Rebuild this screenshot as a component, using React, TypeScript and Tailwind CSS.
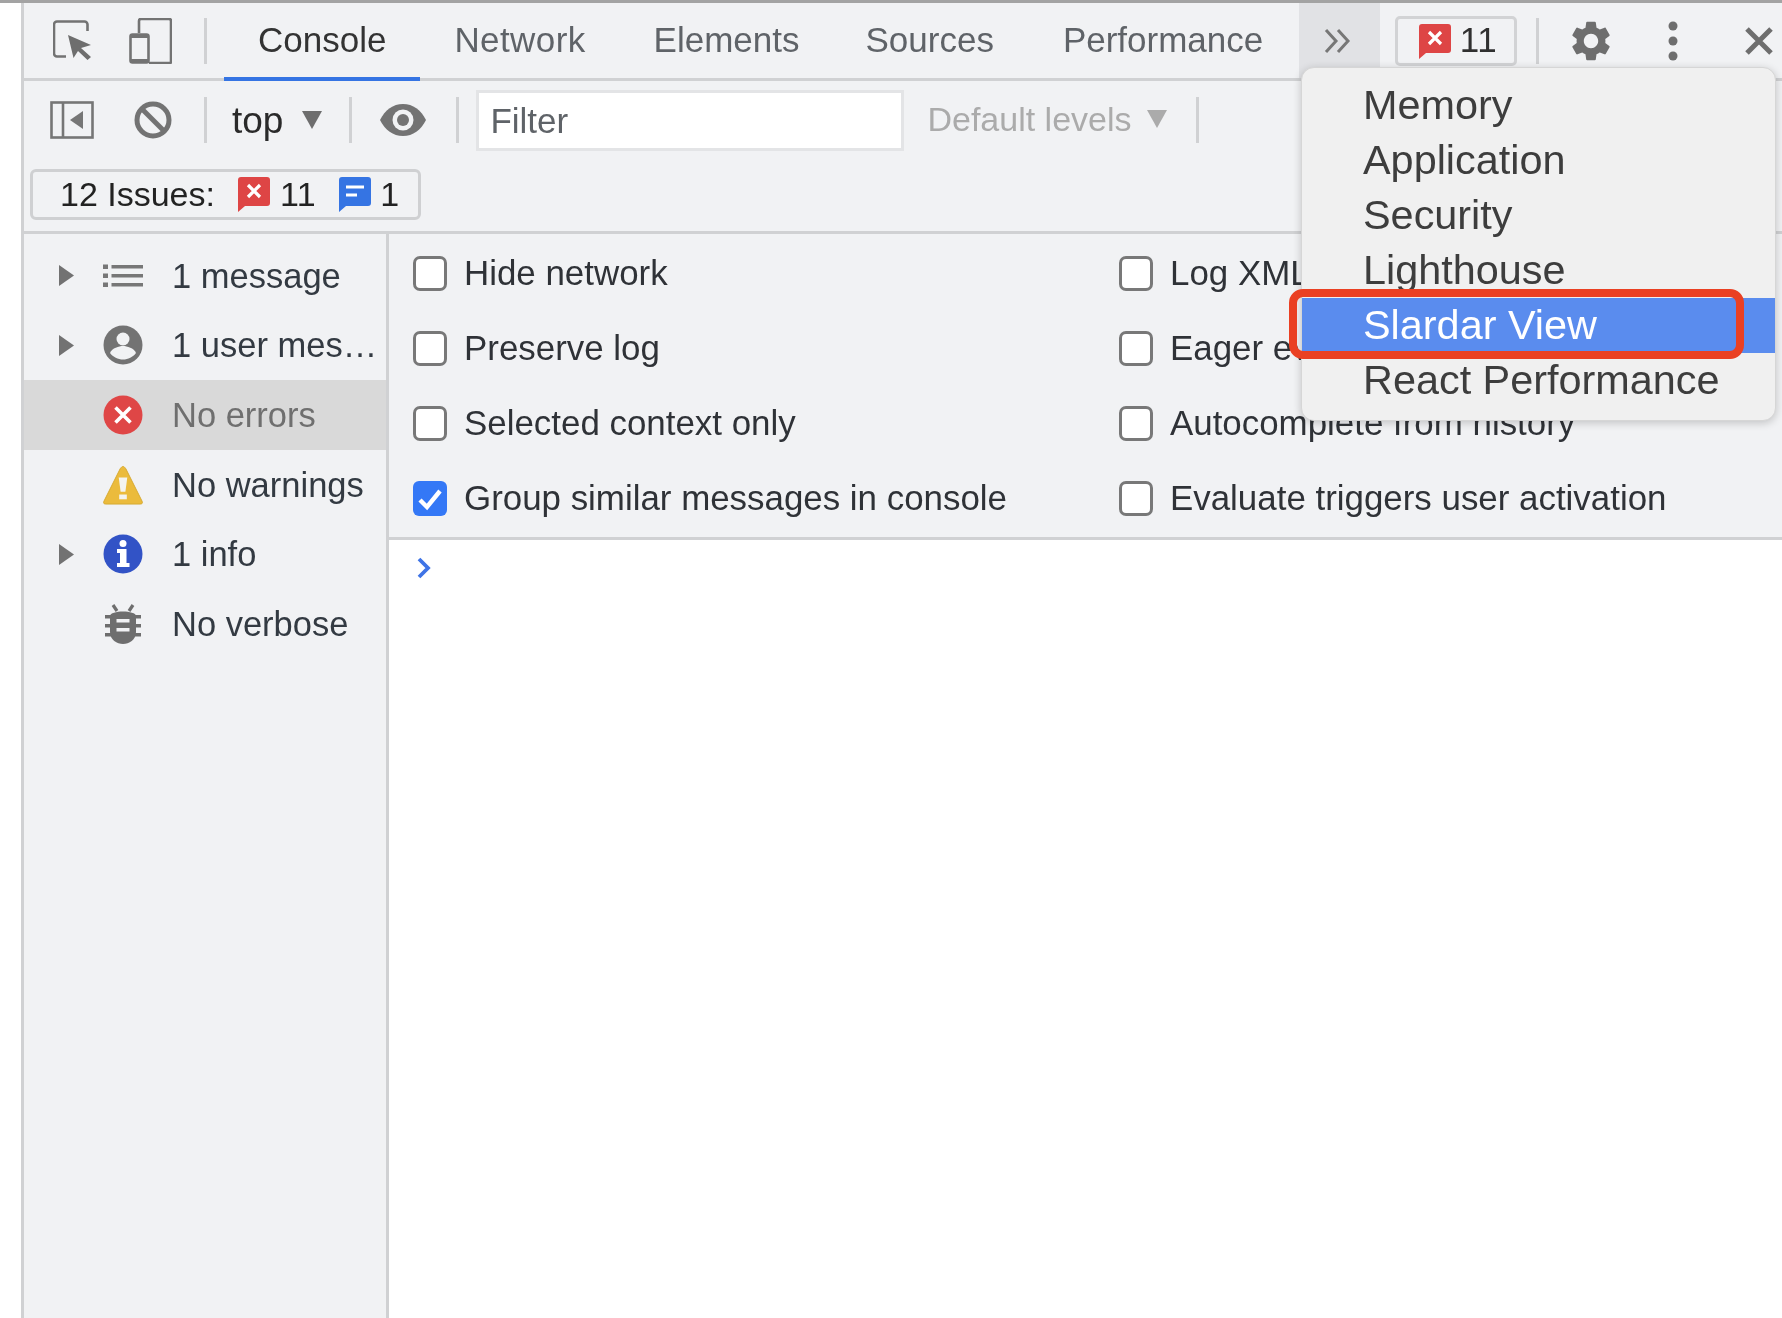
import React from "react";

const Sep = ({ className = "" }: { className?: string }) => (
  <div className={"w-[3px] h-[46px] bg-[#d0d1d3] shrink-0 " + className} />
);

const Tri = ({ className = "", fill = "#6e6e6e" }: { className?: string; fill?: string }) => (
  <svg width="20" height="18" viewBox="0 0 20 18" className={"shrink-0 " + className}>
    <path d="M0 0H20L10 18Z" fill={fill} />
  </svg>
);

const RightTri = () => (
  <svg width="15" height="21" viewBox="0 0 15 21" className="shrink-0">
    <path d="M0 0L15 10.5L0 21Z" fill="#727272" />
  </svg>
);

const Inspect = () => (
  <svg width="40" height="42" viewBox="0 0 40 42" className="shrink-0">
    <path d="M34.5 11V4.5a3 3 0 0 0-3-3H4a3 3 0 0 0-3 3v29a3 3 0 0 0 3 3h9" fill="none" stroke="#737373" strokeWidth="2.6" />
    <path d="M15 15L38 25L28 28L38 37L34.5 40L25 31L20.5 38Z" fill="#6e6e6e" />
  </svg>
);

const Device = () => (
  <svg width="43" height="46" viewBox="0 0 43 46" className="shrink-0">
    <path d="M10 15V3a2 2 0 0 1 2-2h28a2 2 0 0 1 2 2v41a1 1 0 0 1-1 1H20" fill="none" stroke="#737373" strokeWidth="2.6" />
    <rect x="1.5" y="16.5" width="18" height="28" rx="2" fill="none" stroke="#737373" strokeWidth="2.6" />
    <rect x="1" y="16" width="19" height="4" fill="#737373" />
    <rect x="1" y="41" width="19" height="4" fill="#737373" />
  </svg>
);

const Bubble = ({ color, kind }: { color: string; kind: "x" | "lines" }) => (
  <svg width="32" height="36" viewBox="0 0 32 36" className="shrink-0">
    <path d="M3 1H29a3 3 0 0 1 3 3V27a3 3 0 0 1-3 3H7L0 36V4a3 3 0 0 1 3-3Z" fill={color} />
    {kind === "x" ? (
      <path d="M10 9L22 21M22 9L10 21" stroke="#fff" strokeWidth="3.2" />
    ) : (
      <path d="M7 11H25M7 19H18" stroke="#fff" strokeWidth="3" />
    )}
  </svg>
);

const Gear = () => (
  <svg width="48" height="48" viewBox="0 0 24 24" fill="#6e6e6e" className="shrink-0">
    <path d="M19.14 12.94c.04-.3.06-.61.06-.94 0-.32-.02-.64-.07-.94l2.03-1.58c.18-.14.23-.41.12-.61l-1.92-3.32c-.12-.22-.37-.29-.59-.22l-2.39.96c-.5-.38-1.03-.7-1.62-.94l-.36-2.54c-.04-.24-.24-.41-.48-.41h-3.84c-.24 0-.43.17-.47.41l-.36 2.54c-.59.24-1.13.57-1.62.94l-2.39-.96c-.22-.08-.47 0-.59.22L2.74 8.87c-.12.21-.08.47.12.61l2.03 1.58c-.05.3-.09.63-.09.94s.02.64.07.94l-2.03 1.58c-.18.14-.23.41-.12.61l1.92 3.32c.12.22.37.29.59.22l2.39-.96c.5.38 1.03.7 1.62.94l.36 2.54c.05.24.24.41.48.41h3.84c.24 0 .44-.17.47-.41l.36-2.54c.59-.24 1.13-.56 1.62-.94l2.39.96c.22.08.47 0 .59-.22l1.92-3.32c.12-.22.07-.47-.12-.61l-2.01-1.58zM12 15.6c-1.98 0-3.6-1.62-3.6-3.6s1.62-3.6 3.6-3.6 3.6 1.62 3.6 3.6-1.62 3.6-3.6 3.6z" />
  </svg>
);

const Icon = ({ kind }: { kind: string }) => {
  if (kind === "list")
    return (
      <svg width="40" height="40" viewBox="0 0 40 40">
        <path d="M0 8.5H5V13H0ZM0 17.5H5V22H0ZM0 26.5H5V31H0Z" fill="#777" />
        <path d="M8.5 9H40V12.5H8.5ZM8.5 18H40V21.5H8.5ZM8.5 27H40V30.5H8.5Z" fill="#777" />
      </svg>
    );
  if (kind === "user")
    return (
      <svg width="40" height="40" viewBox="0 0 40 40">
        <circle cx="20" cy="20" r="19.5" fill="#737373" />
        <circle cx="20" cy="14" r="6.5" fill="#f1f2f4" />
        <path d="M7 28c2-5 9-7 13-7s11 2 13 7c-3 4-8 6.5-13 6.5S10 32 7 28Z" fill="#f1f2f4" />
      </svg>
    );
  if (kind === "error")
    return (
      <svg width="40" height="40" viewBox="0 0 40 40">
        <circle cx="20" cy="20" r="19.5" fill="#df4646" />
        <path d="M12.5 12.5L27.5 27.5M27.5 12.5L12.5 27.5" stroke="#fff" strokeWidth="3.6" />
      </svg>
    );
  if (kind === "warn")
    return (
      <svg width="42" height="42" viewBox="0 0 42 42">
        <path d="M21 1.5C22 1.5 23 2.5 24 4L41 38C42 40 41 41 39 41H3C1 41 0 40 1 38L18 4C19 2.5 20 1.5 21 1.5Z" fill="#ebbb3c" stroke="#d6a92f" strokeWidth="1" />
        <path d="M16.5 13H25.5L23.5 28H18.5Z" fill="#f4f4f0" />
        <rect x="17" y="31" width="8" height="5" fill="#f4f4f0" />
      </svg>
    );
  if (kind === "info")
    return (
      <svg width="40" height="40" viewBox="0 0 40 40">
        <circle cx="20" cy="20" r="19.5" fill="#3253c6" />
        <circle cx="20" cy="9.5" r="3.5" fill="#fff" />
        <path d="M14 15H23.5V29H26.5V33H14V29H17V19H14Z" fill="#fff" />
      </svg>
    );
  return (
    <svg width="36" height="40" viewBox="0 0 36 40">
      <path d="M8 1L12 7M28 1L24 7" stroke="#6e6e6e" strokeWidth="3.2" fill="none" />
      <path d="M5 12C5 6 31 6 31 12V28C31 36 24 40 18 40S5 36 5 28Z" fill="#6e6e6e" />
      <path d="M0 11H36V14.5H0ZM0 20H36V23.5H0ZM0 29H36V32.5H0Z" fill="#6e6e6e" />
      <path d="M11.5 15H24.5V18.5H11.5ZM11.5 24H24.5V27.5H11.5Z" fill="#f1f2f4" />
    </svg>
  );
};

const sideRows = [
  { arrow: true, icon: "list", label: "1 message" },
  { arrow: true, icon: "user", label: "1 user message" },
  { arrow: false, icon: "error", label: "No errors", active: true },
  { arrow: false, icon: "warn", label: "No warnings" },
  { arrow: true, icon: "info", label: "1 info" },
  { arrow: false, icon: "bug", label: "No verbose" },
];

const Check = ({ label, checked = false }: { label: string; checked?: boolean }) => (
  <div className="h-[75px] flex items-center whitespace-nowrap">
    {checked ? (
      <div className="w-[34px] h-[35px] rounded-[6px] bg-[#3478f6] flex items-center justify-center shrink-0">
        <svg width="26" height="24" viewBox="0 0 26 24">
          <path d="M3 13L10 20L23 4" fill="none" stroke="#fff" strokeWidth="4.4" />
        </svg>
      </div>
    ) : (
      <div className="w-[34px] h-[35px] rounded-[7px] bg-white border-[3px] border-[#787878] shrink-0" />
    )}
    <span className="ml-[17px] text-[34.9px] leading-none text-[#2f3237]">{label}</span>
  </div>
);

export default function App() {
  return (
    <div
      className="relative w-[1782px] h-[1318px] overflow-hidden bg-white flex flex-col blur-[0.6px]"
      style={{ fontFamily: '"Liberation Sans", Arial, sans-serif' }}
    >
      <div className="h-[3px] bg-[#a3a3a3] shrink-0" />
      <div className="flex-1 ml-[21px] border-l-[3px] border-[#d0d1d3] flex flex-col min-h-0">
        {/* tab strip */}
        <div className="h-[78px] shrink-0 bg-[#f1f2f4] border-b-[3px] border-[#d0d1d3] flex items-center">
          <div className="ml-[29px]"><Inspect /></div>
          <div className="ml-[36px]"><Device /></div>
          <Sep className="ml-[32px]" />
          <div className="ml-[17px] flex self-stretch text-[35px] text-[#5f6368]">
            <div className="relative px-[34px] flex items-center text-[#333]">
              Console
              <div className="absolute left-0 right-0 -bottom-[3px] h-[4px] bg-[#3574e3]" />
            </div>
            <div className="px-[34px] flex items-center tracking-[0.4px]">Network</div>
            <div className="pl-[34px] pr-[32px] flex items-center">Elements</div>
            <div className="pl-[34px] pr-[35px] flex items-center">Sources</div>
            <div className="px-[34px] flex items-center">Performance</div>
          </div>
          <div className="ml-auto w-[483px] shrink-0 flex items-center self-stretch">
            <div className="w-[81px] self-stretch bg-[#e1e2e5] flex items-center justify-center">
              <svg width="28" height="26" viewBox="0 0 28 26" className="-ml-[3px]">
                <path d="M2 2L12 13L2 24M14 2L24 13L14 24" fill="none" stroke="#777" strokeWidth="3" />
              </svg>
            </div>
            <div className="ml-[15px] w-[122px] h-[50px] rounded-[5px] border-[3px] border-[#d2d3d5] flex items-center justify-center pl-[4px] text-[35px] text-[#303030] gap-[9px]">
              <Bubble color="#de4545" kind="x" />
              <span className="tracking-[0.5px]">11</span>
            </div>
            <Sep className="ml-[19px]" />
            <div className="ml-[28px]"><Gear /></div>
            <svg width="12" height="40" viewBox="0 0 12 40" className="ml-[52px] shrink-0">
              <circle cx="6" cy="5" r="4.5" fill="#6e6e6e" />
              <circle cx="6" cy="20" r="4.5" fill="#6e6e6e" />
              <circle cx="6" cy="35" r="4.5" fill="#6e6e6e" />
            </svg>
            <svg width="30" height="30" viewBox="0 0 30 30" className="ml-[65px] shrink-0">
              <path d="M3 3L27 27M27 3L3 27" stroke="#6e6e6e" strokeWidth="5" />
            </svg>
          </div>
        </div>

        {/* filter bar */}
        <div className="h-[78px] shrink-0 bg-[#f1f2f4] flex items-center">
          <svg width="44" height="38" viewBox="0 0 44 38" className="ml-[26px] shrink-0">
            <rect x="1.5" y="1.5" width="41" height="35" fill="none" stroke="#767676" strokeWidth="2.6" />
            <path d="M13 1V37" stroke="#767676" strokeWidth="2.6" />
            <path d="M33 10V28L20 19Z" fill="#767676" />
          </svg>
          <svg width="38" height="38" viewBox="0 0 38 38" className="ml-[40px] shrink-0">
            <circle cx="19" cy="19" r="16" fill="none" stroke="#737373" strokeWidth="5" />
            <path d="M8 8L30 30" stroke="#737373" strokeWidth="5" />
          </svg>
          <Sep className="ml-[32px]" />
          <span className="ml-[25px] text-[37px] leading-none text-[#2a2a2a]">top</span>
          <Tri className="ml-[19px]" />
          <Sep className="ml-[27px]" />
          <svg width="46" height="32" viewBox="0 0 46 32" className="ml-[28px] shrink-0">
            <path d="M0 16C5 6 13 0 23 0S41 6 46 16C41 26 33 32 23 32S5 26 0 16Z" fill="#737373" />
            <circle cx="23" cy="16" r="10.5" fill="#f1f2f4" />
            <circle cx="23" cy="16" r="6" fill="#737373" />
          </svg>
          <Sep className="ml-[30px]" />
          <div className="ml-[17px] w-[428px] h-[61px] bg-white border-[3px] border-[#e3e4e6] flex items-center pl-[11px] pt-[3px] text-[35px] text-[#5f6368]">
            Filter
          </div>
          <span className="ml-[23px] -mt-[2px] text-[34px] leading-none text-[#ababab]">Default levels</span>
          <Tri className="ml-[15px] -mt-[2px]" fill="#ababab" />
          <Sep className="ml-[29px]" />
        </div>

        {/* issues bar */}
        <div className="h-[75px] shrink-0 bg-[#f1f2f4] border-b-[3px] border-[#d0d1d3] flex items-center pb-[2px]">
          <div className="ml-[6px] w-[391px] h-[51px] rounded-[6px] border-[3px] border-[#cfd0d2] flex items-center pl-[27px] text-[34px] text-[#222]">
            <span>12 Issues:</span>
            <span className="ml-[23px]"><Bubble color="#de4545" kind="x" /></span>
            <span className="ml-[10px] tracking-[0.5px]">11</span>
            <span className="ml-[23px]"><Bubble color="#3574e3" kind="lines" /></span>
            <span className="ml-[9px]">1</span>
          </div>
        </div>

        {/* body */}
        <div className="flex-1 flex min-h-0">
          <div className="w-[365px] shrink-0 bg-[#f1f2f4] border-r-[3px] border-[#d0d1d3] pt-[7px]">
            {sideRows.map((r) => (
              <div
                key={r.label}
                className={"h-[69.6px] flex items-center " + (r.active ? "bg-[#d9d9d9]" : "")}
              >
                <div className="w-[50px] pl-[35px] shrink-0 flex">{r.arrow && <RightTri />}</div>
                <div className="ml-[29px] w-[40px] flex justify-center shrink-0">
                  <Icon kind={r.icon} />
                </div>
                <span
                  className={
                    "ml-[29px] w-[208px] truncate text-[34.5px] leading-[44px] " +
                    (r.active ? "text-[#6f6f6f]" : "text-[#333a42]")
                  }
                >
                  {r.label}
                </span>
              </div>
            ))}
          </div>
          <div className="flex-1 flex flex-col min-w-0">
            <div className="h-[306px] shrink-0 bg-[#f1f2f4] border-b-[3px] border-[#d0d1d3] flex pl-[24px] pt-[2px]">
              <div className="w-[706px] shrink-0">
                <Check label="Hide network" />
                <Check label="Preserve log" />
                <Check label="Selected context only" />
                <Check label="Group similar messages in console" checked />
              </div>
              <div>
                <Check label="Log XMLHttpRequests" />
                <Check label="Eager evaluation" />
                <Check label="Autocomplete from history" />
                <Check label="Evaluate triggers user activation" />
              </div>
            </div>
            <div className="flex-1 bg-white pl-[27px] pt-[17px]">
              <svg width="16" height="22" viewBox="0 0 16 22">
                <path d="M3 2L12 11L3 20" fill="none" stroke="#3f74e6" strokeWidth="3.8" />
              </svg>
            </div>
          </div>
        </div>
      </div>

      {/* overflow menu */}
      <div className="absolute left-[1301px] top-[67px] w-[475px] h-[354px] rounded-[13px] bg-[#f0f0f0] border border-[#d6d6d6] shadow-[0_2px_8px_rgba(0,0,0,0.2)] pt-[10px] text-[41.4px] text-[#3d3d3d] overflow-hidden">
        {["Memory", "Application", "Security", "Lighthouse", "Slardar View", "React Performance"].map((m) => (
          <div
            key={m}
            className={
              "h-[55px] flex items-center pl-[61px] whitespace-nowrap " +
              (m === "Slardar View" ? "bg-[#5a8cee] text-white" : "")
            }
          >
            {m}
          </div>
        ))}
      </div>
      <div className="absolute left-[1289px] top-[289px] w-[455px] h-[70px] rounded-[14px] border-[8px] border-[#ea4023]" />
    </div>
  );
}
